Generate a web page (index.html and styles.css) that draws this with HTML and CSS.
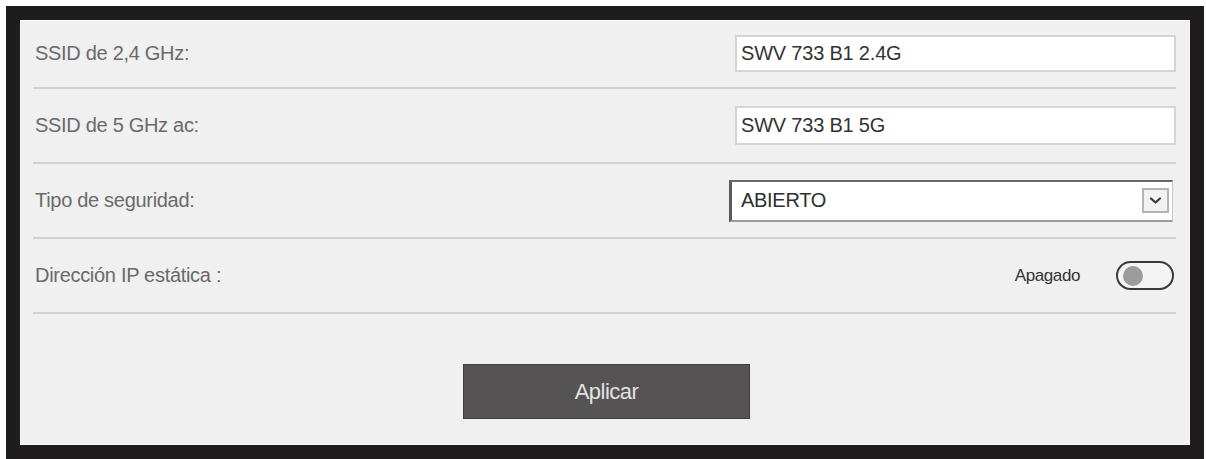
FILE: index.html
```html
<!DOCTYPE html>
<html lang="es">
<head>
<meta charset="utf-8">
<title>Configuración inalámbrica</title>
<link rel="stylesheet" href="styles.css">
</head>
<body>
  <div class="frame">
    <form class="panel">
      <div class="row row-first">
        <span class="label">SSID de 2,4 GHz:</span>
        <input class="field text-field" type="text" value="SWV 733 B1 2.4G">
      </div>
      <div class="row">
        <span class="label">SSID de 5 GHz ac:</span>
        <input class="field text-field tall" type="text" value="SWV 733 B1 5G">
      </div>
      <div class="row">
        <span class="label">Tipo de seguridad:</span>
        <div class="select">
          <span class="select-value">ABIERTO</span>
          <span class="select-arrow">
            <svg width="13" height="9" viewBox="0 0 13 9" aria-hidden="true">
              <path d="M2 2.5 L6.5 6.5 L11 2.5" fill="none" stroke="#3a3a3a" stroke-width="2.2" stroke-linecap="round" stroke-linejoin="round"/>
            </svg>
          </span>
        </div>
      </div>
      <div class="row">
        <span class="label">Dirección IP estática :</span>
        <div class="switch-group">
          <span class="switch-state">Apagado</span>
          <span class="switch"><span class="knob"></span></span>
        </div>
      </div>
      <div class="actions">
        <button class="apply" type="button">Aplicar</button>
      </div>
    </form>
  </div>
</body>
</html>
```
FILE: styles.css
```css
html, body {
  margin: 0;
  background: #ffffff;
}

body {
  padding: 6px 2px 0 6px;
  font-family: "Liberation Sans", Arial, sans-serif;
}

.frame {
  border: 14px solid #1e1c1c;
  height: 425px;
  box-sizing: content-box;
}

.panel {
  height: 100%;
  margin: 0;
  padding: 0 14px 0 13px;
  background: #f0f0f0;
  box-shadow: inset 0 0 0 1px #f8f8f8;
  box-sizing: border-box;
}

.row {
  display: flex;
  align-items: center;
  justify-content: space-between;
  height: 73px;
  border-bottom: 2px solid #d2d2d2;
}

.row-first {
  height: 67px;
}

.label {
  padding-left: 2px;
  font-size: 20px;
  letter-spacing: -0.3px;
  color: #6a6a6a;
}

.field {
  box-sizing: border-box;
  font-family: inherit;
  font-size: 20px;
  letter-spacing: -0.2px;
  color: #333333;
}

.text-field {
  width: 441px;
  height: 37px;
  padding: 0 4px;
  margin: 0;
  background: #ffffff;
  border: 2px solid #d4d4d4;
  outline: none;
}

.text-field.tall {
  height: 39px;
}

.select {
  display: flex;
  align-items: center;
  justify-content: space-between;
  box-sizing: border-box;
  width: 444px;
  height: 42px;
  margin-right: 3px;
  padding: 0 3px 0 9px;
  background: #ffffff;
  border-top: 2px solid #6a6a6a;
  border-left: 3px solid #5a5a5a;
  border-right: 1px solid #c8c8c8;
  border-bottom: 2px solid #9a9a9a;
  font-size: 20px;
  letter-spacing: -0.3px;
  color: #2e2e2e;
}

.select-arrow {
  display: flex;
  align-items: center;
  justify-content: center;
  box-sizing: border-box;
  width: 27px;
  height: 25px;
  background: #f2f2f2;
  border: 2px solid #b4b4b4;
}

.switch-group {
  display: flex;
  align-items: center;
  gap: 36px;
  margin-right: 2px;
}

.switch-state {
  font-size: 17px;
  letter-spacing: -0.4px;
  color: #333333;
}

.switch {
  display: flex;
  align-items: center;
  box-sizing: border-box;
  width: 58px;
  height: 29px;
  padding-left: 5px;
  border: 2px solid #3a3a3a;
  border-radius: 15px;
  background: #f4f4f4;
}

.knob {
  width: 20px;
  height: 20px;
  border-radius: 50%;
  background: #9c9c9c;
}

.actions {
  display: flex;
  justify-content: center;
  padding-top: 50px;
}

.apply {
  width: 287px;
  height: 55px;
  margin-left: 4px;
  border: 1px solid #3f3d3d;
  background: #555353;
  color: #e2e2e2;
  font-family: inherit;
  font-size: 22px;
  letter-spacing: -0.5px;
}
```
